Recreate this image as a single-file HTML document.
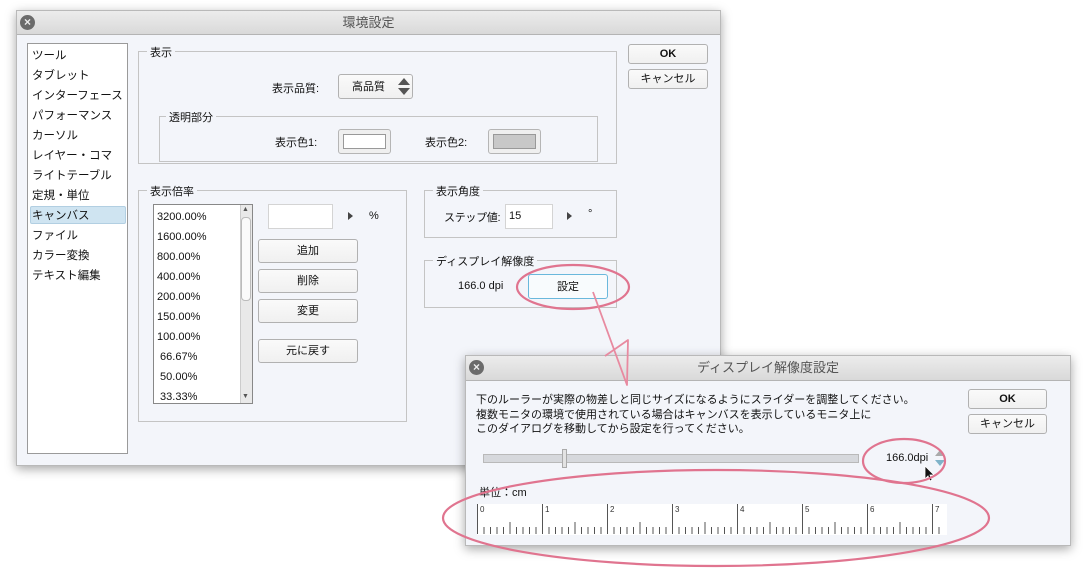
<!DOCTYPE html>
<html><head><meta charset="utf-8"><style>
*{margin:0;padding:0;box-sizing:border-box}
body{width:1085px;height:580px;background:#fff;position:relative;overflow:hidden;font-family:"Liberation Sans","Noto Sans CJK JP",sans-serif;font-size:11px;color:#111}
.a{position:absolute}
.win{position:absolute;background:#f3f5fa;border:1px solid #b9b9b9;box-shadow:0 3px 10px rgba(0,0,0,.35)}
.tb{position:absolute;left:0;right:0;top:0;background:linear-gradient(#ececec,#d9d9d9);border-bottom:1px solid #b4b4b4;color:#555;font-size:13px;text-align:center}
.x{position:absolute;width:15px;height:15px;border-radius:50%;background:#6b6b6b;color:#eee;font-size:12px;line-height:15px;text-align:center;font-weight:bold}
.grp{position:absolute;border:1px solid #c4c4c4}
.gl{position:absolute;top:-8px;left:8px;background:#f3f5fa;padding:0 3px;font-size:11px}
.btn{position:absolute;border:1px solid #b1b1b1;border-radius:3px;background:linear-gradient(#fafafa,#f0f0f0);text-align:center;font-size:11px}
.inp{position:absolute;background:#fff;border:1px solid #d4d4d4}
.tri{position:absolute;width:0;height:0;border-top:4px solid transparent;border-bottom:4px solid transparent;border-left:5px solid #444}
</style></head><body>

<div class="win" style="left:16px;top:10px;width:705px;height:456px">
 <div class="tb" style="height:24px;line-height:23px">環境設定</div>
 <div class="x" style="left:3px;top:4px">×</div>
</div>
<div class="a" style="left:27px;top:43px;width:101px;height:411px;background:#fff;border:1px solid #9a9a9a"></div>
<div class="a" style="left:30px;top:206px;width:96px;height:18px;background:#cfe4f1;border:1px solid #b2cfe2;border-radius:2px"></div>
<div class="a" style="left:32px;top:46px;line-height:20px;font-size:11.5px">ツール<br>タブレット<br>インターフェース<br>パフォーマンス<br>カーソル<br>レイヤー・コマ<br>ライトテーブル<br>定規・単位<br>キャンバス<br>ファイル<br>カラー変換<br>テキスト編集</div>

<div class="grp" style="left:138px;top:51px;width:479px;height:113px"><span class="gl">表示</span></div>
<div class="a" style="left:272px;top:80px">表示品質:</div>
<div class="btn" style="left:338px;top:74px;width:75px;height:25px;line-height:24px;text-align:left;padding-left:13px">高品質</div>
<div class="a" style="left:398px;top:78px;width:0;height:0;border-left:6px solid transparent;border-right:6px solid transparent;border-bottom:7px solid #555"></div>
<div class="a" style="left:398px;top:88px;width:0;height:0;border-left:6px solid transparent;border-right:6px solid transparent;border-top:7px solid #555"></div>
<div class="grp" style="left:159px;top:116px;width:439px;height:46px"><span class="gl" style="left:6px">透明部分</span></div>
<div class="a" style="left:275px;top:134px">表示色1:</div>
<div class="a" style="left:338px;top:129px;width:53px;height:25px;border:1px solid #b5b5b5;border-radius:3px;background:#efefef"></div>
<div class="a" style="left:343px;top:134px;width:43px;height:15px;background:#fff;border:1px solid #999"></div>
<div class="a" style="left:425px;top:134px">表示色2:</div>
<div class="a" style="left:488px;top:129px;width:53px;height:25px;border:1px solid #b5b5b5;border-radius:3px;background:#efefef"></div>
<div class="a" style="left:493px;top:134px;width:43px;height:15px;background:#c8c8c8;border:1px solid #999"></div>

<div class="grp" style="left:138px;top:190px;width:269px;height:232px"><span class="gl">表示倍率</span></div>
<div class="a" style="left:153px;top:204px;width:100px;height:200px;background:#fff;border:1px solid #888"></div>
<div class="a" style="left:240px;top:205px;width:12px;height:198px;background:#e9e9e9;border-left:1px solid #ccc"></div>
<div class="a" style="left:241px;top:217px;width:10px;height:84px;background:#fafafa;border:1px solid #bbb;border-radius:4px"></div>
<div class="a" style="left:242px;top:206px;font-size:7px;color:#555">▲</div>
<div class="a" style="left:242px;top:393px;font-size:7px;color:#555">▼</div>
<div class="a" style="left:157px;top:207px;line-height:20px;font-size:11px">3200.00%<br>1600.00%<br>800.00%<br>400.00%<br>200.00%<br>150.00%<br>100.00%<br>&nbsp;66.67%<br>&nbsp;50.00%<br>&nbsp;33.33%</div>
<div class="inp" style="left:268px;top:204px;width:65px;height:25px"></div>
<div class="tri" style="left:348px;top:212px"></div>
<div class="a" style="left:369px;top:210px">%</div>
<div class="btn" style="left:258px;top:239px;width:100px;height:24px;line-height:23px">追加</div>
<div class="btn" style="left:258px;top:269px;width:100px;height:24px;line-height:23px">削除</div>
<div class="btn" style="left:258px;top:299px;width:100px;height:24px;line-height:23px">変更</div>
<div class="btn" style="left:258px;top:339px;width:100px;height:24px;line-height:23px">元に戻す</div>

<div class="grp" style="left:424px;top:190px;width:193px;height:48px"><span class="gl">表示角度</span></div>
<div class="a" style="left:444px;top:209px;font-size:11px;letter-spacing:-0.3px">ステップ値:</div>
<div class="inp" style="left:505px;top:204px;width:48px;height:25px;padding:5px 3px">15</div>
<div class="tri" style="left:567px;top:212px"></div>
<div class="a" style="left:588px;top:208px">°</div>

<div class="grp" style="left:424px;top:260px;width:193px;height:48px"><span class="gl">ディスプレイ解像度</span></div>
<div class="a" style="left:458px;top:280px">166.0 dpi</div>
<div class="btn" style="left:528px;top:274px;width:80px;height:25px;line-height:24px;border-color:#6ab8dc;background:#f8fbfd">設定</div>

<div class="btn" style="left:628px;top:44px;width:80px;height:20px;line-height:19px;font-weight:bold">OK</div>
<div class="btn" style="left:628px;top:69px;width:80px;height:20px;line-height:19px">キャンセル</div>

<div class="win" style="left:465px;top:355px;width:606px;height:191px">
 <div class="tb" style="height:25px;line-height:24px">ディスプレイ解像度設定</div>
 <div class="x" style="left:3px;top:4px">×</div>
</div>
<div class="a" style="left:476px;top:393px;line-height:14.5px;font-size:11px">下のルーラーが実際の物差しと同じサイズになるようにスライダーを調整してください。<br>複数モニタの環境で使用されている場合はキャンバスを表示しているモニタ上に<br>このダイアログを移動してから設定を行ってください。</div>
<div class="btn" style="left:968px;top:389px;width:79px;height:20px;line-height:19px;font-weight:bold">OK</div>
<div class="btn" style="left:968px;top:414px;width:79px;height:20px;line-height:19px">キャンセル</div>
<div class="a" style="left:483px;top:454px;width:376px;height:9px;background:#d6d8dc;border:1px solid #b9b9b9"></div>
<div class="a" style="left:562px;top:449px;width:5px;height:19px;background:#e3e3e3;border:1px solid #aaa"></div>
<div class="a" style="left:886px;top:452px">166.0dpi</div>
<div class="a" style="left:935px;top:450px;width:0;height:0;border-left:5px solid transparent;border-right:5px solid transparent;border-bottom:6px solid #aaa"></div>
<div class="a" style="left:935px;top:460px;width:0;height:0;border-left:5px solid transparent;border-right:5px solid transparent;border-top:6px solid #7fb3c9"></div>
<div class="a" style="left:479px;top:484px">単位：cm</div>

<svg class="a" style="left:0;top:0" width="1085" height="580">
 <rect x="477" y="504" width="470" height="31" fill="#fff"/>
 <g id="ticks" stroke="#555" stroke-width="1"></g>
 <g font-size="8" fill="#333" font-family="Liberation Sans">
  <text x="480" y="512">0</text><text x="545" y="512">1</text><text x="610" y="512">2</text><text x="675" y="512">3</text><text x="740" y="512">4</text><text x="805" y="512">5</text><text x="870" y="512">6</text><text x="935" y="512">7</text>
 </g>
 <path d="M925 466 l0 13 l3 -3 l2 5 l2 -1 l-2 -5 l4 0 z" fill="#111" stroke="#fff" stroke-width="0.8"/>
 <g fill="none" stroke="#e0748f" stroke-width="2.2">
  <ellipse cx="573" cy="287" rx="56" ry="22"/>
  <ellipse cx="904" cy="461" rx="41" ry="22"/>
  <ellipse cx="716" cy="518" rx="273" ry="48"/>
 </g>
 <path d="M593 292 L627 385 L628 340 L605 356" fill="none" stroke="#e88aa0" stroke-width="1.8" stroke-linejoin="round"/>
</svg>
<script>
var g=document.getElementById('ticks'),s='';
for(var i=0;i<=71;i++){var x=477.5+i*6.5;var big=(i%10==0);var h=big?30:(i%5==0?12:7);var y1=big?504:534-h;s+='<line x1="'+x+'" x2="'+x+'" y1="'+y1+'" y2="534"/>';}
g.innerHTML=s;
</script>
</body></html>
